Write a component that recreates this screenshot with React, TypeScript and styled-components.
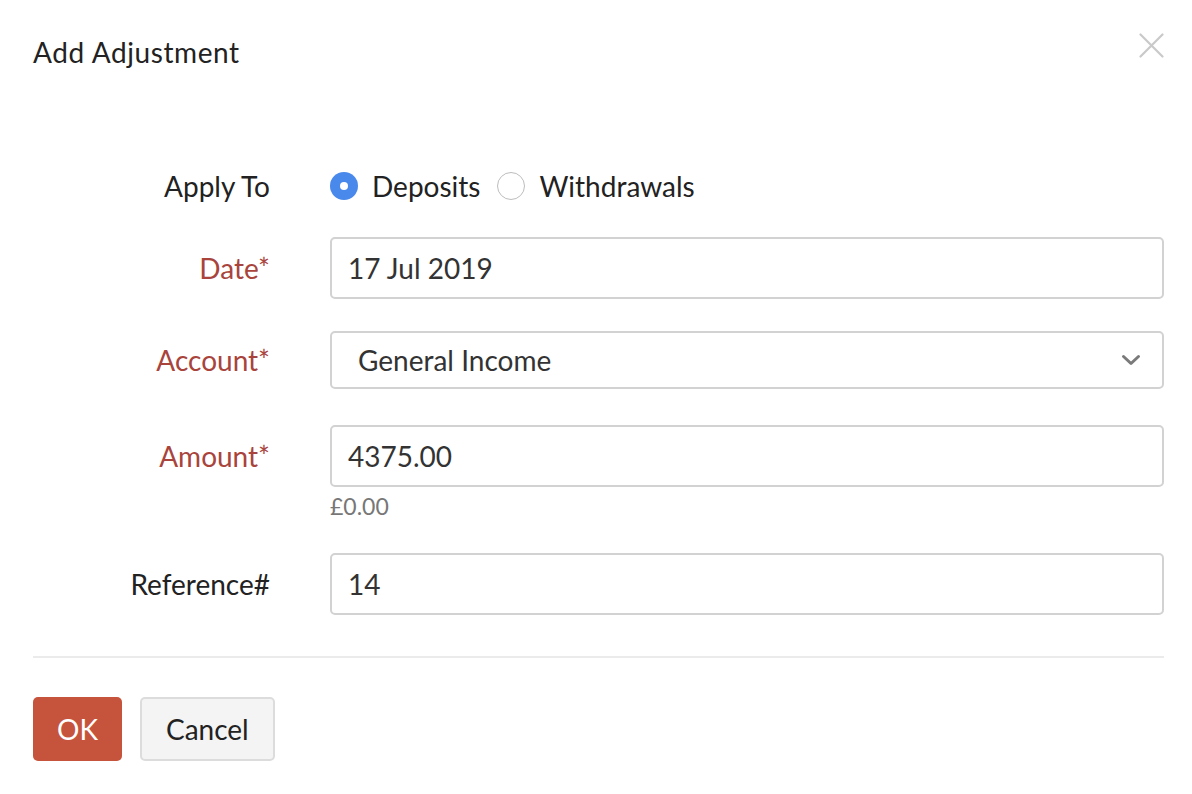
import styled, { createGlobalStyle } from "styled-components";

const GlobalStyle = createGlobalStyle`
  html, body {
    margin: 0;
    padding: 0;
    background: #ffffff;
    font-family: Lato, "Open Sans", sans-serif;
    color: #222222;
  }
  * {
    box-sizing: border-box;
  }
`;

const Modal = styled.div`
  width: 1192px;
  height: 794px;
  background: #fff;
  padding: 0 28px 0 33px;
`;

const Header = styled.div`
  height: 104px;
  display: flex;
  align-items: center;
  justify-content: space-between;
`;

const Title = styled.h2`
  margin: 0;
  font-weight: 400;
  font-size: 28px;
  letter-spacing: 0.6px;
  color: #222;
`;

const Close = styled.button`
  width: 26px;
  height: 26px;
  padding: 0;
  border: none;
  background: none;
  margin-top: -14px;
  display: flex;
  align-items: center;
  justify-content: center;
  cursor: pointer;
`;

const Form = styled.div`
  padding-top: 62px;
`;

const Row = styled.div<{ $gap?: number }>`
  display: grid;
  grid-template-columns: 237px 1fr;
  column-gap: 60px;
  margin-bottom: ${(p) => p.$gap ?? 32}px;
`;

const Label = styled.label<{ $required?: boolean; $h?: number }>`
  height: ${(p) => p.$h ?? 62}px;
  display: flex;
  align-items: center;
  justify-content: flex-end;
  font-size: 28px;
  color: ${(p) => (p.$required ? "#a8443c" : "#222")};
`;

const Radios = styled.div`
  display: flex;
  align-items: center;
  height: 40px;
`;

const RadioOption = styled.label`
  display: flex;
  align-items: center;
  font-size: 28px;
  color: #222;
  margin-right: 17px;
  cursor: pointer;
`;

const RadioDot = styled.span<{ $checked?: boolean }>`
  width: 28px;
  height: 28px;
  border-radius: 50%;
  margin-right: 14px;
  display: inline-flex;
  align-items: center;
  justify-content: center;
  background: ${(p) => (p.$checked ? "#4a89ec" : "#fff")};
  border: ${(p) => (p.$checked ? "none" : "1.5px solid #bdbdbd")};
  &::after {
    content: "";
    width: 8px;
    height: 8px;
    border-radius: 50%;
    background: #fff;
    display: ${(p) => (p.$checked ? "block" : "none")};
  }
`;

const Field = styled.div`
  display: flex;
  flex-direction: column;
`;

const Input = styled.div<{ $h?: number; $pad?: number }>`
  height: ${(p) => p.$h ?? 62}px;
  border: 2px solid #d2d2d2;
  border-radius: 5px;
  padding: 0 ${(p) => p.$pad ?? 16}px;
  display: flex;
  align-items: center;
  justify-content: space-between;
  font-size: 28px;
  color: #333;
`;

const Hint = styled.div`
  font-size: 23px;
  line-height: 28px;
  color: #777;
  margin-top: 5px;
`;

const Divider = styled.hr`
  border: none;
  border-top: 2px solid #ebebeb;
  margin: 41px 0 39px;
`;

const Buttons = styled.div`
  display: flex;
  gap: 18px;
`;

const Button = styled.button<{ $primary?: boolean }>`
  height: 64px;
  padding: 0 ${(p) => (p.$primary ? 24 : 24)}px;
  border-radius: 5px;
  font-family: Lato, "Open Sans", sans-serif;
  font-size: 28px;
  cursor: pointer;
  background: ${(p) => (p.$primary ? "#c6533b" : "#f4f4f4")};
  color: ${(p) => (p.$primary ? "#fff" : "#222")};
  border: ${(p) => (p.$primary ? "none" : "2px solid #dcdcdc")};
`;

const App = (): JSX.Element => {
  return (
    <Modal>
      <GlobalStyle />
      <Header>
        <Title>Add Adjustment</Title>
        <Close aria-label="close">
          <svg width="25" height="25" viewBox="0 0 25 25">
            <path d="M1.5 1.5L23.5 23.5M23.5 1.5L1.5 23.5" stroke="#c9c9c9" strokeWidth="2.2" strokeLinecap="round" />
          </svg>
        </Close>
      </Header>
      <Form>
        <Row $gap={31}>
          <Label $h={40}>Apply To</Label>
          <Radios>
            <RadioOption>
              <RadioDot $checked />
              Deposits
            </RadioOption>
            <RadioOption>
              <RadioDot />
              Withdrawals
            </RadioOption>
          </Radios>
        </Row>
        <Row>
          <Label $required>Date*</Label>
          <Input>17 Jul 2019</Input>
        </Row>
        <Row $gap={36}>
          <Label $required $h={58}>Account*</Label>
          <Input $h={58} $pad={26}>
            General Income
            <svg width="20" height="12" viewBox="0 0 20 12" style={{ marginRight: -5 }}>
              <path d="M2.5 2.5L10 9.5L17.5 2.5" stroke="#7a7a7a" strokeWidth="3" fill="none" strokeLinecap="round" strokeLinejoin="round" />
            </svg>
          </Input>
        </Row>
        <Row $gap={33}>
          <Label $required>Amount*</Label>
          <Field>
            <Input>4375.00</Input>
            <Hint>£0.00</Hint>
          </Field>
        </Row>
        <Row $gap={0}>
          <Label>Reference#</Label>
          <Input>14</Input>
        </Row>
      </Form>
      <Divider />
      <Buttons>
        <Button $primary>OK</Button>
        <Button>Cancel</Button>
      </Buttons>
    </Modal>
  );
};

export default App;
